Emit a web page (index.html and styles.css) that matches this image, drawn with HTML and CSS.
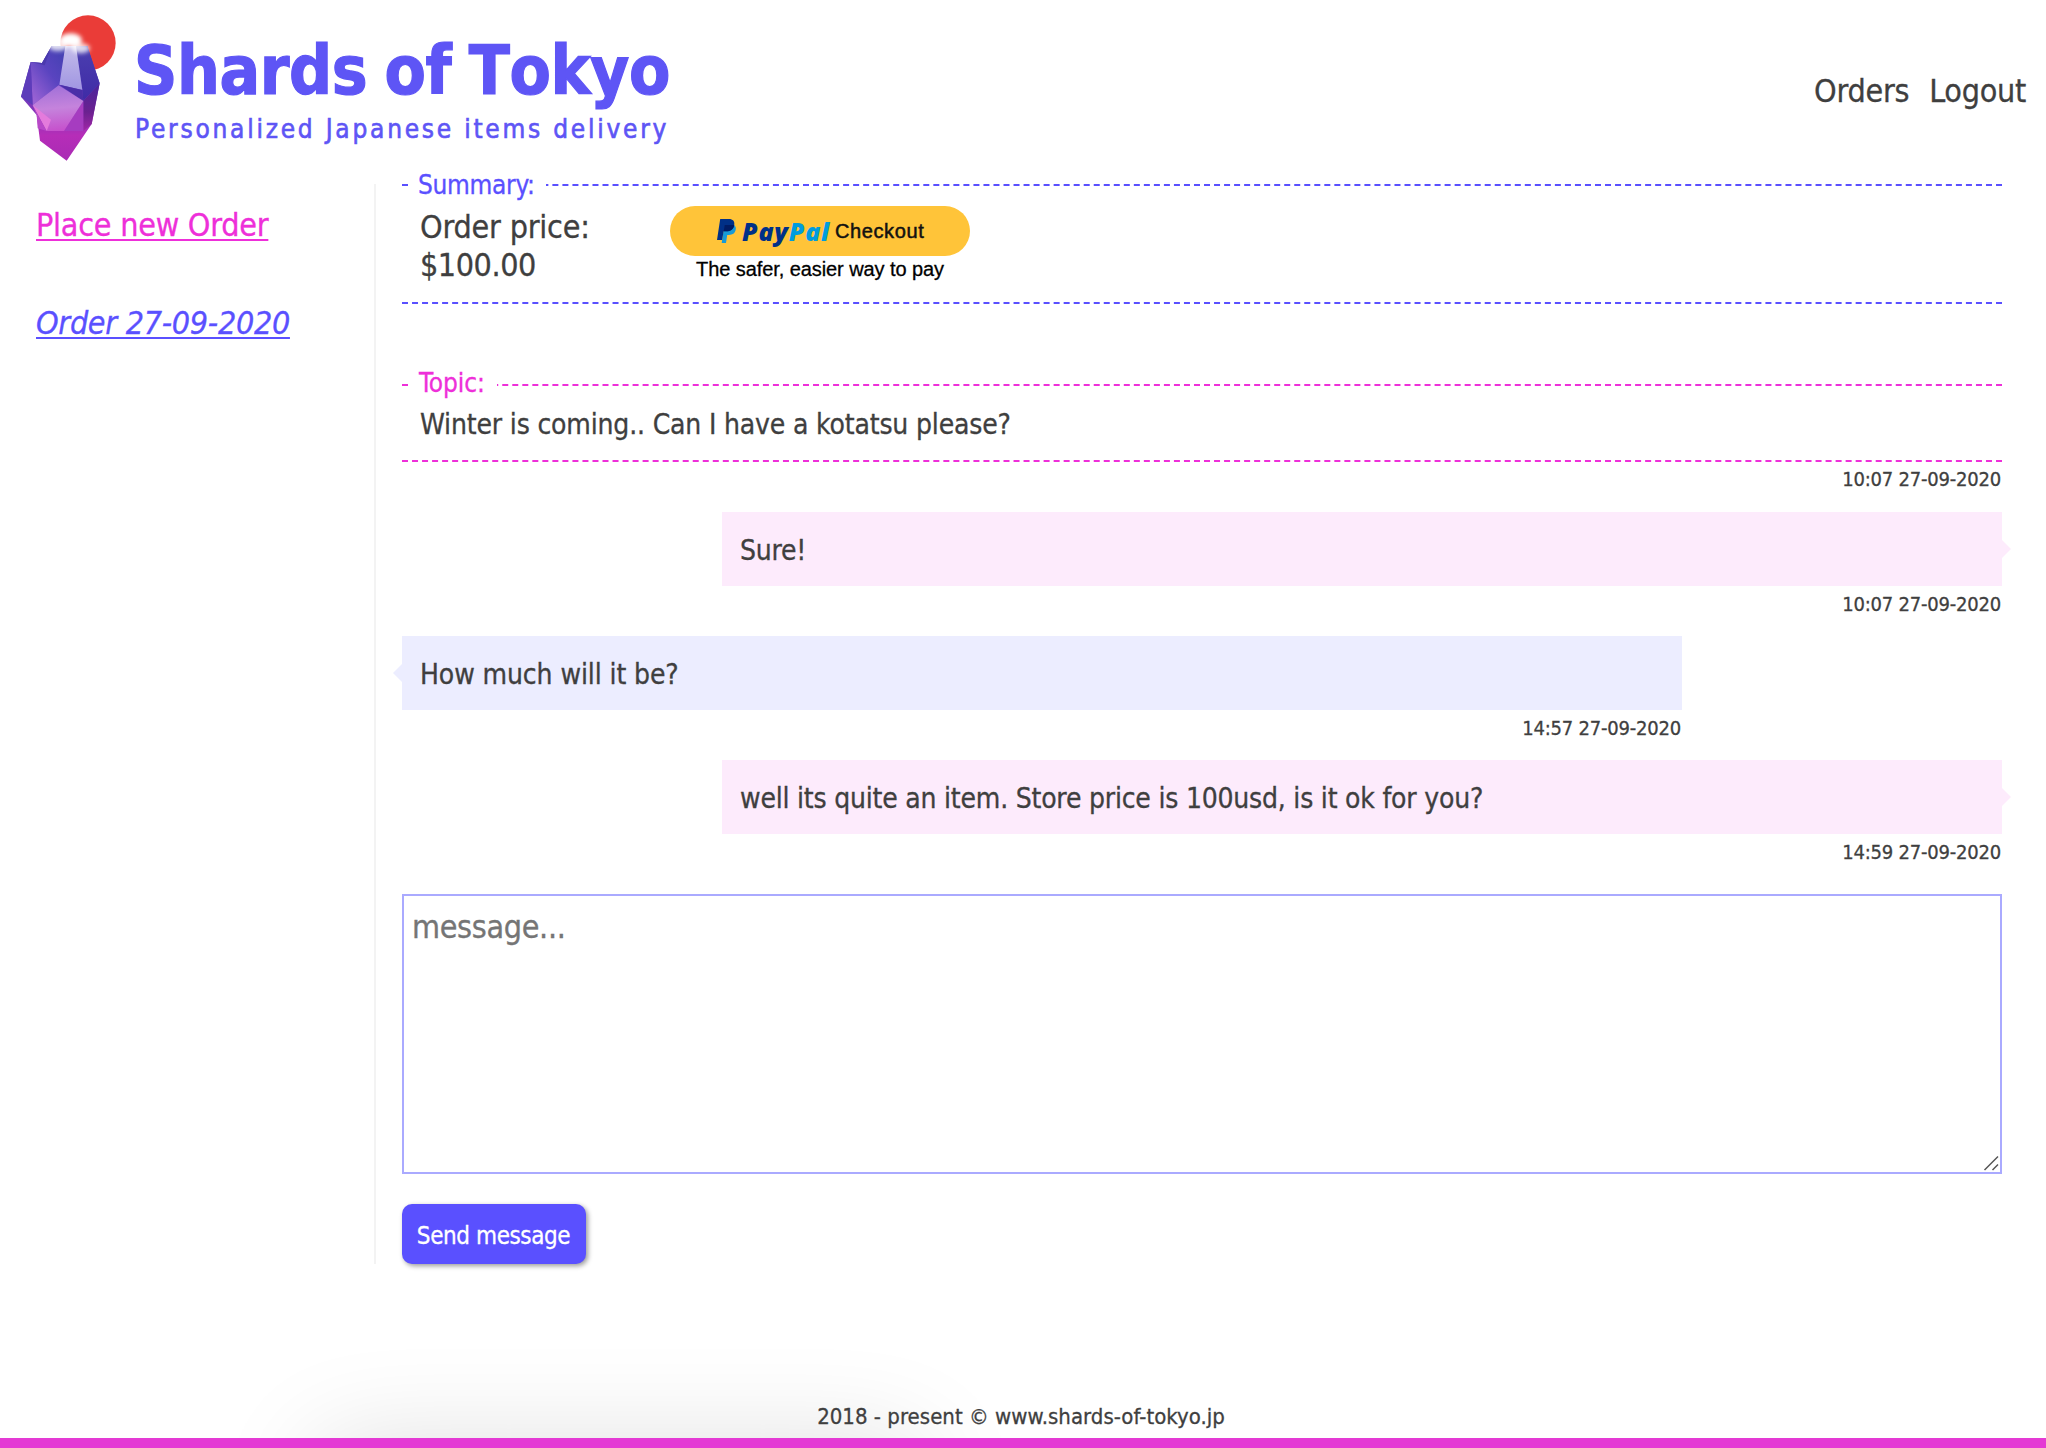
FILE: index.html
```html
<!DOCTYPE html>
<html lang="en">
<head>
<meta charset="utf-8">
<title>Shards of Tokyo</title>
<link rel="stylesheet" href="styles.css">
</head>
<body>
<header class="header">
  <a class="brand">
    <svg class="brand-logo" viewBox="60 45 291 438" aria-hidden="true">
      <defs>
        <linearGradient id="body" x1="0" y1="0" x2="0" y2="1">
          <stop offset="0" stop-color="#4a3aa8"/><stop offset=".3" stop-color="#5a3fc0"/><stop offset=".6" stop-color="#8a35b8"/><stop offset=".78" stop-color="#b62db8"/><stop offset="1" stop-color="#a92bb4"/>
        </linearGradient>
        <linearGradient id="left" x1="1" y1="0" x2=".2" y2="1">
          <stop offset="0" stop-color="#4040b0"/><stop offset=".5" stop-color="#5a44c0"/><stop offset="1" stop-color="#9a62d4"/>
        </linearGradient>
        <linearGradient id="strip" x1="0" y1="0" x2="0" y2="1">
          <stop offset="0" stop-color="#c3bcea"/><stop offset="1" stop-color="#a095e2"/>
        </linearGradient>
        <linearGradient id="right" x1="0" y1="0" x2="0" y2="1">
          <stop offset="0" stop-color="#4b3fb0"/><stop offset="1" stop-color="#3f2ba6"/>
        </linearGradient>
        <linearGradient id="diamond" x1=".4" y1="0" x2=".5" y2="1">
          <stop offset="0" stop-color="#a070d8"/><stop offset=".5" stop-color="#c583dc"/><stop offset="1" stop-color="#c650cc"/>
        </linearGradient>
        <linearGradient id="edge" x1="0" y1="0" x2="0" y2="1">
          <stop offset="0" stop-color="#4a259c"/><stop offset=".6" stop-color="#6b2190"/><stop offset="1" stop-color="#a027a6"/>
        </linearGradient>
        <filter id="soft" x="-50%" y="-50%" width="200%" height="200%"><feGaussianBlur stdDeviation="6"/></filter>
      </defs>
      <circle cx="264" cy="129" r="83" fill="#ea3c38"/>
      <path fill="url(#body)" d="M155 138 262 138 299 250 275 372 200 482 120 422 110 345 63 290 92 186 126 189Z"/>
      <path fill="url(#left)" d="M155 138H196L178 254 98 315 92 186 126 189Z"/>
      <path fill="#5d3cba" d="M92 186 98 315 63 290Z"/>
      <path fill="#4634a6" d="M92 186 126 189 155 138 134 196Z" opacity=".7"/>
      <path fill="url(#right)" d="M228 138H262L299 250 250 303 247 270Z"/>
      <path fill="url(#edge)" d="M299 250 275 372 250 393V303Z"/>
      <path fill="#a63cc0" d="M250 303V393H192Z"/>
      <path fill="url(#strip)" d="M196 138H228L247 270 178 254Z"/>
      <path fill="#4a2fa8" d="M178 254 247 270 250 303Z"/>
      <path fill="url(#diamond)" d="M176 256 250 303 192 393H140L98 315Z"/>
      <path fill="#e47bdc" d="M98 315 153 359 140 393Z"/>
      <path fill="#b848c8" d="M98 315 140 393 113 385 110 345Z"/>
      <g filter="url(#soft)" fill="#fff">
        <ellipse cx="212" cy="120" rx="34" ry="20"/>
        <ellipse cx="174" cy="140" rx="28" ry="13" opacity=".8"/>
        <ellipse cx="242" cy="145" rx="28" ry="15" opacity=".8"/>
        <ellipse cx="160" cy="120" rx="18" ry="14"/>
      </g>
    </svg>
    <span class="brand-text">
      <span class="brand-title">Shards of Tokyo</span>
      <span class="brand-tagline">Personalized Japanese items delivery</span>
    </span>
  </a>
  <nav class="nav"><a>Orders</a><a>Logout</a></nav>
</header>

<main class="main">
  <aside class="sidebar">
    <a class="link link-new">Place new Order</a>
    <a class="link link-order">Order 27-09-2020</a>
  </aside>
  <section class="content">
    <fieldset class="box box-summary">
      <legend class="legend legend-summary">Summary:</legend>
      <div class="summary">
        <div class="price">Order price:<br><span class="amount">$100.00</span></div>
        <div class="paypal">
          <div class="paypal-button">
            <svg class="paypal-mark" viewBox="0 0 19 24" aria-hidden="true">
              <path fill="#179bd7" d="M17.3 6.2c2 1.400 1.900 4.500.6 6.800-1.300 2.300-3.700 3-6.500 3h-1.200l-1.200 8H4.700L6.900 9.500Z"/>
              <path fill="#003087" d="M3.200 0h8.600c4.100 0 6.100 2.200 5.400 6.200-.8 4.400-3.800 6.100-7.900 6.100H6.600L5.100 21H0Z"/>
              <path fill="#001c64" d="M7.700 6h7.600c.8 0 1.400.1 1.900.3-.8 4.300-3.800 6-7.900 6H6.700Z"/>
            </svg>
            <span class="paypal-word">Pay<span class="paypal-pal">Pal</span></span>
            <span class="paypal-label">Checkout</span>
          </div>
          <div class="paypal-note">The safer, easier way to pay</div>
        </div>
      </div>
    </fieldset>

    <fieldset class="box box-topic">
      <legend class="legend legend-topic">Topic:</legend>
      <div class="topic">Winter is coming.. Can I have a kotatsu please?</div>
    </fieldset>
    <div class="stamp">10:07 27-09-2020</div>

    <div class="message message-staff">
      <div class="bubble">Sure!</div>
      <div class="stamp">10:07 27-09-2020</div>
    </div>
    <div class="message message-client">
      <div class="bubble">How much will it be?</div>
      <div class="stamp">14:57 27-09-2020</div>
    </div>
    <div class="message message-staff">
      <div class="bubble">well its quite an item. Store price is 100usd, is it ok for you?</div>
      <div class="stamp">14:59 27-09-2020</div>
    </div>

    <div class="field">
      <textarea class="textarea" placeholder="message..."></textarea>
      <svg class="grip" viewBox="0 0 16 16" aria-hidden="true"><path d="M1.500 15 15 1.500M9.500 15 15 9.500"/></svg>
    </div>
    <button class="button">Send message</button>
  </section>
</main>

<footer class="footer">2018 - present © www.shards-of-tokyo.jp</footer>
</body>
</html>
```
FILE: styles.css
```css
* { box-sizing: border-box; }

body {
  margin: 0;
  height: 1448px;
  display: flex;
  flex-direction: column;
  background: #fff;
  color: #3f3f3f;
  font-family: Tahoma, "DejaVu Sans Condensed", "DejaVu Sans", sans-serif;
  font-size: 32px;
  letter-spacing: -0.21px;
  -webkit-text-stroke: 0.3px;
}

.header {
  height: 184px;
  display: flex;
  justify-content: space-between;
  align-items: flex-start;
  padding: 15px 20px 0;
}
.brand { display: flex; gap: 17px; color: #5e55f5; }
.brand-logo { width: 97px; height: 146px; }
.brand-text { display: flex; flex-direction: column; gap: 7px; padding-top: 22px; }
.brand-title {
  font-size: 67px;
  font-weight: bold;
  line-height: 68px;
  letter-spacing: -0.45px;
  word-spacing: -3px;
  font-kerning: none;
  -webkit-text-stroke: 1.200px;
}
.brand-tagline { padding-left: 1px; font-size: 26px; line-height: 34px; letter-spacing: 2.76px; -webkit-text-stroke: 0.6px; }
.nav { display: flex; gap: 20px; padding-top: 56px; line-height: 40px; letter-spacing: -0.28px; }

.main { display: flex; height: 1080px; }

.sidebar {
  width: 376px;
  border-right: 2px solid #f3f3f3;
  padding: 21px 36px;
  display: flex;
  flex-direction: column;
  align-items: flex-start;
  gap: 58px;
}
.link {
  line-height: 40px;
  text-decoration: underline;
  text-decoration-thickness: 2px;
  text-underline-offset: 3px;
  text-decoration-skip-ink: none;
  letter-spacing: -0.25px;
}
.link-new { color: #ee2fd9; }
.link-order { color: #5a50ff; font-style: italic; letter-spacing: -0.3px; }

.content { width: 1626px; padding-left: 26px; }

.box {
  margin: 0;
  padding: 0 18px;
  border: 0;
  min-width: 0;
}
.box-summary { height: 135px; margin-top: -15px; border-top: 2px dashed #5a50ff; border-bottom: 2px dashed #5a50ff; }
.box-topic { height: 93px; margin-top: 65px; border-top: 2px dashed #ee2fd9; border-bottom: 2px dashed #ee2fd9; }
.legend { margin-left: -12px; padding: 0 0 0 10px; font-size: 26px; line-height: 32px; }
.legend-summary { width: 138px; color: #5a50ff; letter-spacing: -0.3px; }
.legend-topic { width: 89px; padding: 0 0 4px 11px; line-height: 28px; color: #ee2fd9; letter-spacing: -0.08px; }

.summary { display: flex; padding-top: 5px; }
.price { width: 250px; padding-top: 2px; line-height: 38px; }
.amount { letter-spacing: -0.45px; }
.topic { padding-top: 7px; font-size: 28px; line-height: 34px; letter-spacing: -0.17px; }

.paypal { width: 300px; font-family: "Helvetica Neue", "Liberation Sans", sans-serif; font-size: 20px; }
.paypal-button {
  height: 50px;
  border-radius: 25px;
  background: #ffc439;
  display: flex;
  align-items: center;
  padding-left: 47px;
}
.paypal-mark { width: 19px; height: 24px; }
.paypal-word {
  flex: none;
  width: 99px;
  padding-left: 6px;
  font: italic 800 25px/50px "Open Sans", sans-serif;
  letter-spacing: 0.8px;
  color: #003087;
  -webkit-text-stroke: 0;
}
.paypal-pal { color: #009cde; }
.paypal-label { color: #111; letter-spacing: 0.6px; -webkit-text-stroke: 0.5px #111; }
.paypal-note { margin-top: -1px; line-height: 28px; text-align: center; color: #000; letter-spacing: -0.08px; }

.stamp { height: 50px; padding-right: 1px; font-size: 20px; line-height: 34px; text-align: right; }

.message { width: 1280px; }
.message .stamp { padding-top: 1px; }
.message-staff { margin-left: 320px; }
.bubble { position: relative; height: 74px; padding: 0 18px; font-size: 28px; line-height: 78px; }
.bubble::after {
  content: "";
  position: absolute;
  top: 28px;
  border: solid transparent;
  border-width: 9.500px 0;
}
.message-staff .bubble { background: #fdebfc; }
.message-staff .bubble::after { left: 100%; border-left: 9px solid #fdebfc; }
.message-client .bubble { background: #ecedff; letter-spacing: -0.1px; }
.message-client .bubble::after { right: 100%; border-right: 9px solid #ecedff; }

.field { position: relative; height: 280px; margin-top: 10px; }
.textarea {
  display: block;
  width: 100%;
  height: 100%;
  padding: 11px 8px;
  border: 2px solid #aaaaff;
  border-radius: 0;
  resize: none;
  outline: none;
  background: #fff;
  font: inherit;
  line-height: 40px;
  letter-spacing: -0.33px;
}
.textarea::placeholder { color: #757575; }
.grip { position: absolute; right: 3px; bottom: 3px; width: 16px; height: 16px; fill: none; stroke: #555; stroke-width: 1.500; }

.button {
  display: block;
  width: 184px;
  height: 60px;
  margin-top: 30px;
  padding: 4px 1px 0 0;
  border: 0;
  border-radius: 10px;
  background: #5a50ff;
  box-shadow: 2px 2px 5px rgba(0, 0, 0, 0.4);
  color: #fff;
  font: inherit;
  font-size: 24px;
  letter-spacing: -0.42px;
}

.footer {
  position: relative;
  flex: 1;
  overflow: hidden;
  padding: 134px 4px 0 0;
  border-bottom: 10px solid #e43ad4;
  font-size: 22px;
  line-height: 38px;
  text-align: center;
  letter-spacing: 0.02px;
}
.footer::before {
  content: "";
  position: absolute;
  z-index: -1;
  left: 320px;
  top: 184px;
  width: 600px;
  height: 200px;
  box-shadow: 0 0 110px rgba(0, 0, 0, 0.14);
}
```
